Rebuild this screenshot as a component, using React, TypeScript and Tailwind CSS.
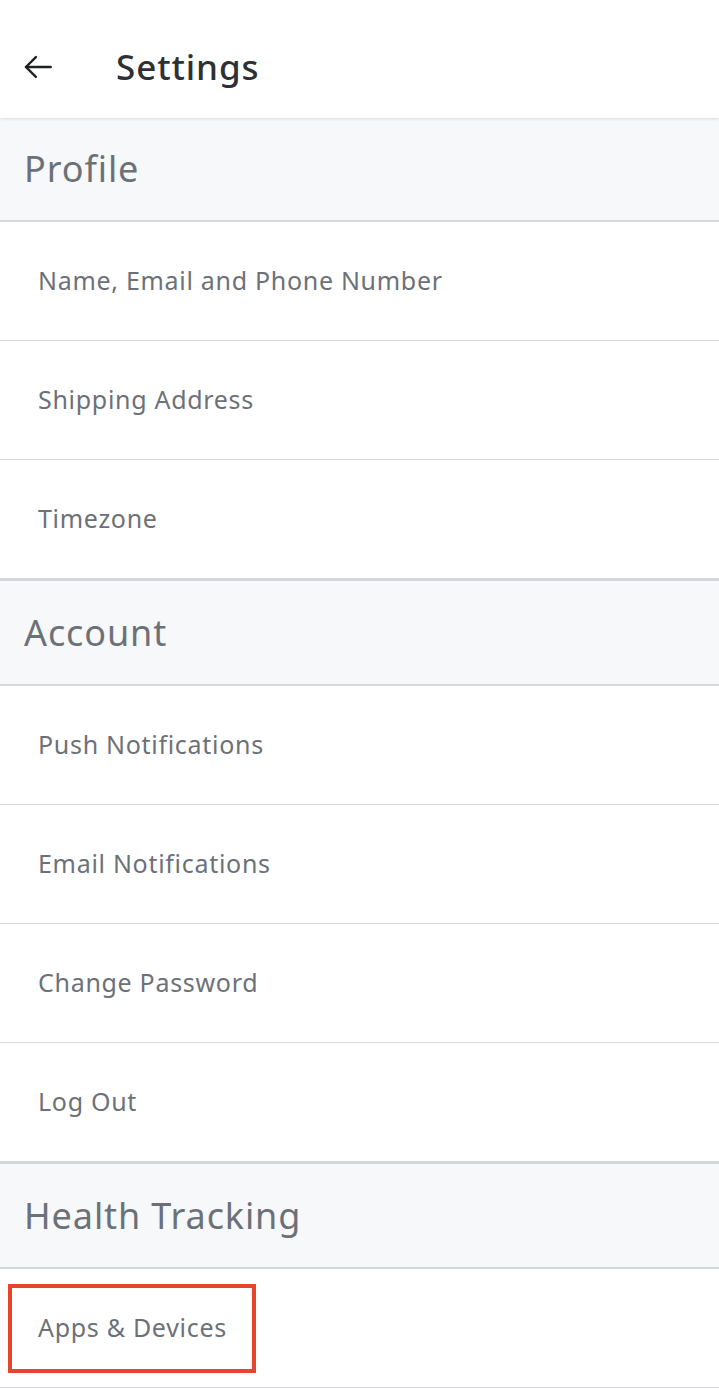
const sections: { title: string; items: string[] }[] = [
  { title: "Profile", items: ["Name, Email and Phone Number", "Shipping Address", "Timezone"] },
  { title: "Account", items: ["Push Notifications", "Email Notifications", "Change Password", "Log Out"] },
  { title: "Health Tracking", items: ["Apps & Devices"] },
];

function BackArrow() {
  return (
    <svg width="34" height="34" viewBox="0 0 24 24" fill="none" stroke="#1f2023" strokeWidth="1.7" strokeLinecap="round" strokeLinejoin="round">
      <path d="M21 12H3.5" />
      <path d="M10.5 5l-7 7 7 7" />
    </svg>
  );
}

export default function App() {
  return (
    <div className="w-[719px] min-h-[1388px] bg-white overflow-hidden" style={{ fontFamily: "'Noto Sans', 'Open Sans', sans-serif" }}>
      <header className="h-[118px] flex items-center pt-4 px-[21px] bg-white shadow-[0_1px_3px_rgba(0,0,0,0.12)] relative z-10">
        <BackArrow />
        <h1 className="ml-[61px] text-[35px] font-medium text-[#2e3034] tracking-[0.9px]">Settings</h1>
      </header>
      {sections.map((section, si) => (
        <section key={section.title}>
          <div
            className={`bg-[#f7f8fa] flex items-center px-6 border-b-2 border-[#d4d7db] ${
              si > 0 ? "h-[107px] border-t-2" : "h-[104px]"
            }`}
          >
            <h2 className="text-[36px] text-[#6c7178] tracking-[0.9px]">{section.title}</h2>
          </div>
          {section.items.map((item) => {
            const highlighted = item === "Apps & Devices";
            return (
              <div key={item} className="h-[119px] flex items-center border-b border-[#d4d7db] px-2">
                <div
                  className={`h-[89px] flex items-center ${
                    highlighted ? "border-4 border-[#e8432d] w-[248px] pl-[26px]" : "pl-[30px]"
                  }`}
                >
                  <span className="text-[25px] text-[#6c7178] tracking-[0.7px] whitespace-nowrap">{item}</span>
                </div>
              </div>
            );
          })}
        </section>
      ))}
    </div>
  );
}
